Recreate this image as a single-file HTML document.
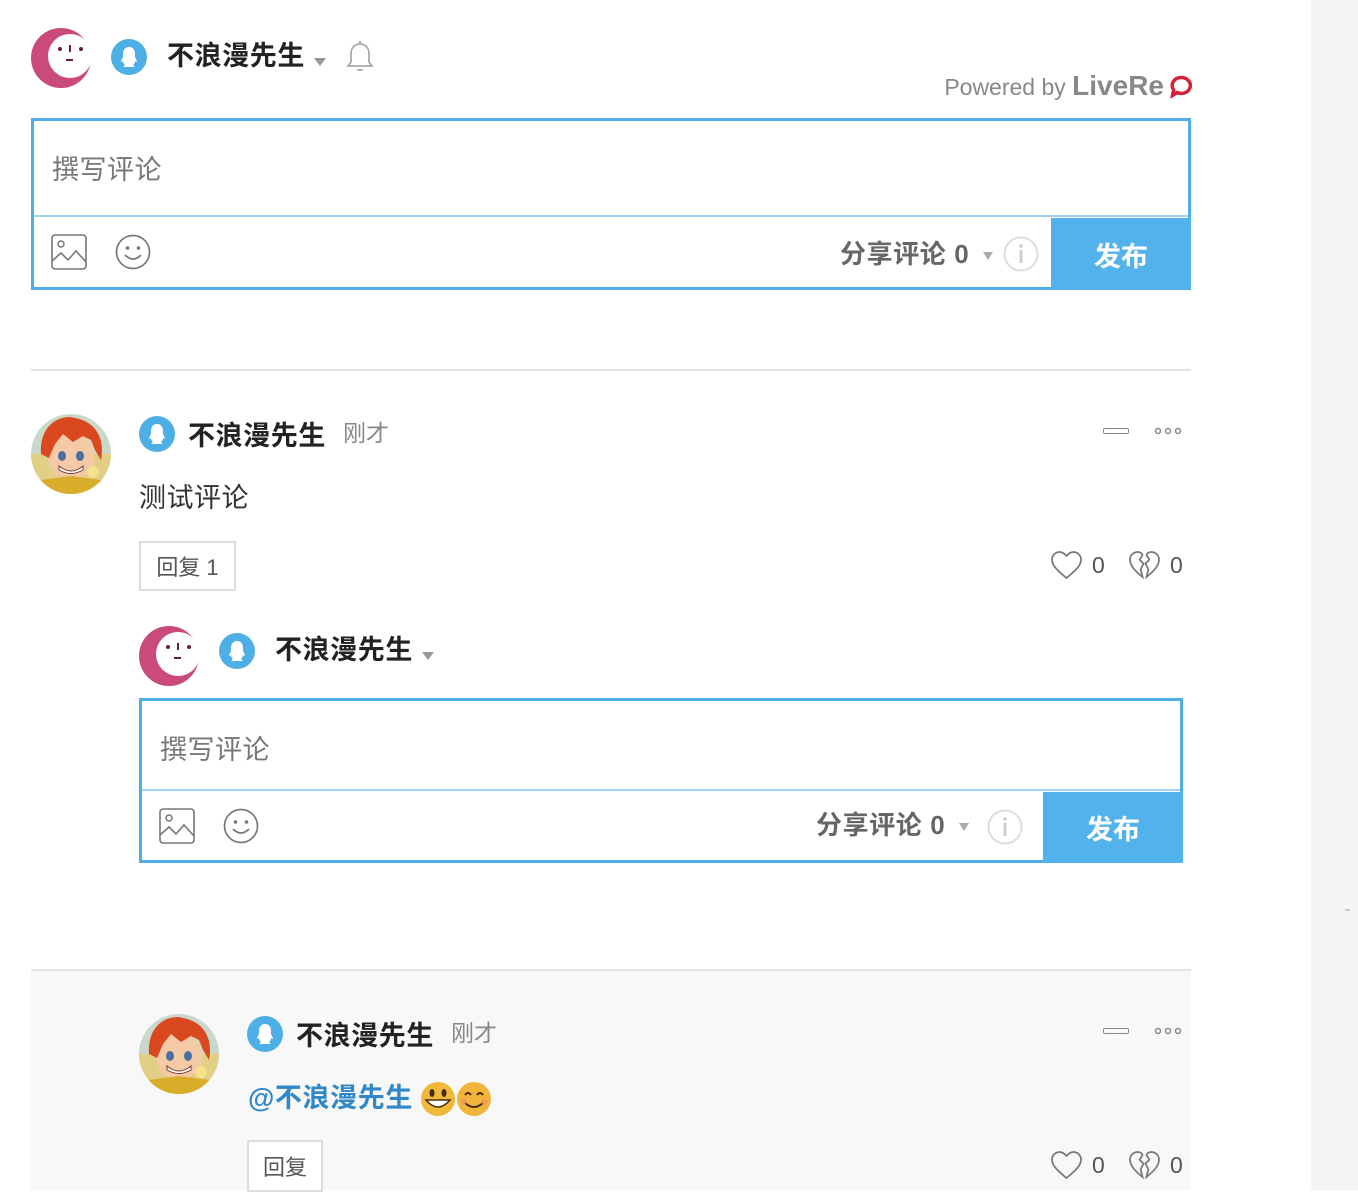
<!DOCTYPE html>
<html><head><meta charset="utf-8">
<style>
*{margin:0;padding:0;box-sizing:border-box}
body{width:1358px;height:1190px;position:relative;background:#fff;overflow:hidden;font-family:"Liberation Sans","Noto Sans CJK SC",sans-serif}
.a{position:absolute;white-space:nowrap}
.name{font-size:27px;font-weight:bold;color:#222;line-height:34px;letter-spacing:0.6px}
.time{font-size:23px;color:#888;line-height:30px}
.ph{font-size:27px;color:#777;line-height:34px;letter-spacing:0.5px}
.share{font-size:26px;font-weight:bold;color:#666;line-height:34px;letter-spacing:0.6px}
.btn{background:#52b2eb;color:#fff;font-size:27px;font-weight:bold;display:flex;align-items:center;justify-content:center}
.box{border:3px solid #4fb0e9;background:#fff}
.reply{border:2px solid #ddd;background:#fff;font-size:22px;color:#555;display:flex;align-items:center;justify-content:center}
.cnt{font-size:23px;color:#555;line-height:30px}
</style></head><body>
<svg width="0" height="0" style="position:absolute">
<defs>
<symbol id="qq" viewBox="0 0 36 36"><circle cx="18" cy="18" r="18" fill="#4eaee6"/><path d="M18 8c-4 0-6 3-6 7v3l-2 4c0 1 1 1 2 0 0 2 1 3 2 4-1 1-2 1-1 2h10c1-1 0-1-1-2 1-1 2-2 2-4 1 1 2 1 2 0l-2-4v-3c0-4-2-7-6-7z" fill="#fff"/></symbol>
<symbol id="me" viewBox="0 0 60 60"><circle cx="30" cy="30" r="30" fill="#c94a7b"/><circle cx="39" cy="28" r="22" fill="#fff"/><circle cx="29" cy="21" r="2" fill="#6b1d35"/><circle cx="50" cy="21" r="2" fill="#6b1d35"/><rect x="38" y="17" width="2" height="7" fill="#6b1d35"/><rect x="35" y="31" width="7" height="2" fill="#6b1d35"/></symbol>
<symbol id="dots" viewBox="0 0 28 8"><circle cx="4" cy="4" r="2.5" fill="none" stroke="#888" stroke-width="1.5"/><circle cx="14" cy="4" r="2.5" fill="none" stroke="#888" stroke-width="1.5"/><circle cx="24" cy="4" r="2.5" fill="none" stroke="#888" stroke-width="1.5"/></symbol>
<clipPath id="cc"><circle cx="40" cy="40" r="40"/></clipPath>
<symbol id="av" viewBox="0 0 80 80"><g clip-path="url(#cc)"><rect width="80" height="80" fill="#c9d8c8"/><rect y="40" width="80" height="40" fill="#e2cf86"/><ellipse cx="40" cy="42" rx="23" ry="24" fill="#f3c9a6"/><path d="M10 40C8 10 30 0 44 4 66 8 74 26 70 46L64 36 60 26 52 22 42 28 32 20 24 30 18 44z" fill="#d9481e"/><ellipse cx="31" cy="42" rx="4" ry="5" fill="#4a6fa3"/><ellipse cx="49" cy="42" rx="4" ry="5" fill="#4a6fa3"/><path d="M28 52q12 10 24 0v4q-12 7-24 0z" fill="#fff" stroke="#7a3a2a"/><path d="M10 66 40 62 70 66 80 80 0 80z" fill="#d8ad2a"/><circle cx="62" cy="58" r="6" fill="#f4e38a"/></g></symbol>
<symbol id="img" viewBox="0 0 36 36"><rect x="1" y="1" width="34" height="34" rx="3" fill="none" stroke="#777" stroke-width="1.6"/><circle cx="10" cy="10" r="3" fill="none" stroke="#777" stroke-width="1.5"/><path d="M1 27l9-8 7 7 8-9 10 11" fill="none" stroke="#777" stroke-width="1.6"/></symbol>
<symbol id="smi" viewBox="0 0 36 36"><circle cx="18" cy="18" r="16.5" fill="none" stroke="#777" stroke-width="1.7"/><circle cx="12.5" cy="14" r="1.8" fill="#777"/><circle cx="23.5" cy="14" r="1.8" fill="#777"/><path d="M10 21q8 8 16 0" fill="none" stroke="#777" stroke-width="1.7"/></symbol>
<symbol id="info" viewBox="0 0 36 36"><circle cx="18" cy="18" r="16.5" fill="none" stroke="#ddd" stroke-width="2"/><circle cx="18" cy="10" r="1.8" fill="#ccc"/><rect x="16.5" y="14" width="3" height="13" fill="#ccc"/></symbol>
<symbol id="heart" viewBox="0 0 34 30"><path d="M17 28C10 22 2 16 2 9 2 4 6 1 10 1c3 0 5 2 7 4 2-2 4-4 7-4 4 0 8 3 8 8 0 7-8 13-15 19z" fill="none" stroke="#777" stroke-width="1.8"/></symbol>
<symbol id="bheart" viewBox="0 0 34 30"><path d="M15 27C9 22 2 16 2 9 2 4 6 1 10 1c2 0 4 1 5 3l-3 5 4 4-3 6 2 8z" fill="none" stroke="#777" stroke-width="1.8"/><path d="M19 27C25 22 32 16 32 9 32 4 28 1 24 1c-2 0-4 1-5 3l3 5-4 4 3 6-2 8z" fill="none" stroke="#777" stroke-width="1.8"/></symbol>
<symbol id="bell" viewBox="0 0 32 34"><path d="M4 26h24l-3-4V13c0-5-4-9-9-9s-9 4-9 9v9z" fill="none" stroke="#aaa" stroke-width="1.8"/><rect x="15" y="1" width="2" height="3" fill="#aaa"/><path d="M12 29q4 4 8 0z" fill="#aaa"/></symbol>
</defs></svg>

<div class="a" style="left:1311px;top:0;width:47px;height:1190px;background:#f4f5f7"></div>
<div class="a" style="left:1345px;top:909px;width:5px;height:2px;background:#ccc"></div>

<!-- top editor -->
<svg class="a" style="left:31px;top:28px" width="60" height="60"><use href="#me"/></svg>
<svg class="a" style="left:111px;top:39px" width="36" height="36"><use href="#qq"/></svg>
<div class="a name" style="left:167px;top:39px">不浪漫先生</div>
<div class="a" style="left:314px;top:58px;border-left:6px solid transparent;border-right:6px solid transparent;border-top:8px solid #999"></div>
<svg class="a" style="left:344px;top:40px" width="32" height="34"><use href="#bell"/></svg>
<div class="a" style="right:194px;top:71px;font-size:23px;color:#888;line-height:30px">Powered by <b style="font-size:28px;color:#888">LiveRe</b></div>
<svg class="a" style="left:1169px;top:75px" width="23" height="23"><path d="M12 2.5a9 8 0 1 1-4 15l-4.5 3 1.2-5.5A9 8 0 0 1 12 2.5z" fill="none" stroke="#d3203b" stroke-width="3.5"/></svg>

<div class="a box" style="left:31px;top:118px;width:1160px;height:172px"></div>
<div class="a" style="left:34px;top:215px;width:1154px;height:2px;background:#9fd3f2"></div>
<div class="a ph" style="left:52px;top:153px">撰写评论</div>
<svg class="a" style="left:51px;top:234px" width="36" height="36"><use href="#img"/></svg>
<svg class="a" style="left:115px;top:234px" width="36" height="36"><use href="#smi"/></svg>
<div class="a share" style="left:840px;top:237px">分享评论 0</div>
<div class="a" style="left:983px;top:252px;border-left:5px solid transparent;border-right:5px solid transparent;border-top:8px solid #aaa"></div>
<svg class="a" style="left:1003px;top:236px" width="36" height="36"><use href="#info"/></svg>
<div class="a btn" style="left:1051px;top:218px;width:140px;height:72px">发布</div>

<div class="a" style="left:31px;top:369px;width:1160px;height:2px;background:#e2e2e2"></div>

<!-- comment 1 -->
<svg class="a" style="left:31px;top:414px" width="80" height="80"><use href="#av"/></svg>
<svg class="a" style="left:139px;top:416px" width="36" height="36"><use href="#qq"/></svg>
<div class="a name" style="left:188px;top:419px">不浪漫先生</div>
<div class="a time" style="left:343px;top:418px">刚才</div>
<div class="a" style="left:1103px;top:428px;width:26px;height:6px;border:1.5px solid #888;border-radius:2px"></div>
<svg class="a" style="left:1154px;top:427px" width="28" height="8"><use href="#dots"/></svg>
<div class="a" style="left:139px;top:481px;font-size:27px;color:#333;line-height:34px;letter-spacing:0.5px">测试评论</div>
<div class="a reply" style="left:139px;top:541px;width:97px;height:50px">回复 1</div>
<svg class="a" style="left:1050px;top:551px" width="33" height="29"><use href="#heart"/></svg>
<div class="a cnt" style="left:1092px;top:550px">0</div>
<svg class="a" style="left:1128px;top:551px" width="33" height="29"><use href="#bheart"/></svg>
<div class="a cnt" style="left:1170px;top:550px">0</div>

<!-- nested editor -->
<svg class="a" style="left:139px;top:626px" width="60" height="60"><use href="#me"/></svg>
<svg class="a" style="left:219px;top:633px" width="36" height="36"><use href="#qq"/></svg>
<div class="a name" style="left:275px;top:633px">不浪漫先生</div>
<div class="a" style="left:422px;top:652px;border-left:6px solid transparent;border-right:6px solid transparent;border-top:8px solid #999"></div>
<div class="a box" style="left:139px;top:698px;width:1044px;height:165px"></div>
<div class="a" style="left:142px;top:789px;width:1038px;height:2px;background:#9fd3f2"></div>
<div class="a ph" style="left:160px;top:733px">撰写评论</div>
<svg class="a" style="left:159px;top:808px" width="36" height="36"><use href="#img"/></svg>
<svg class="a" style="left:223px;top:808px" width="36" height="36"><use href="#smi"/></svg>
<div class="a share" style="left:816px;top:808px">分享评论 0</div>
<div class="a" style="left:959px;top:823px;border-left:5px solid transparent;border-right:5px solid transparent;border-top:8px solid #aaa"></div>
<svg class="a" style="left:987px;top:809px" width="36" height="36"><use href="#info"/></svg>
<div class="a btn" style="left:1043px;top:792px;width:140px;height:71px">发布</div>

<!-- comment 2 -->
<div class="a" style="left:31px;top:969px;width:1160px;height:2px;background:#e2e2e2"></div>
<div class="a" style="left:31px;top:971px;width:1160px;height:219px;background:#f8f8f8"></div>
<svg class="a" style="left:139px;top:1014px" width="80" height="80"><use href="#av"/></svg>
<svg class="a" style="left:247px;top:1016px" width="36" height="36"><use href="#qq"/></svg>
<div class="a name" style="left:296px;top:1019px">不浪漫先生</div>
<div class="a time" style="left:451px;top:1018px">刚才</div>
<div class="a" style="left:1103px;top:1028px;width:26px;height:6px;border:1.5px solid #888;border-radius:2px"></div>
<svg class="a" style="left:1154px;top:1027px" width="28" height="8"><use href="#dots"/></svg>
<div class="a" style="left:248px;top:1081px;font-size:27px;font-weight:bold;color:#3188c9;line-height:34px;letter-spacing:0.6px">@不浪漫先生</div>
<svg class="a" style="left:420px;top:1080px" width="74" height="38">
<circle cx="18" cy="19" r="17" fill="#f0b93a"/><ellipse cx="12" cy="13" rx="2.5" ry="4" fill="#4a2b10"/><ellipse cx="24" cy="13" rx="2.5" ry="4" fill="#4a2b10"/><path d="M6 20q12 14 24 0z" fill="#fff" stroke="#4a2b10" stroke-width="1.5"/>
<circle cx="54" cy="19" r="17" fill="#f2b53c"/><path d="M45 15q3-4 6 0M57 15q3-4 6 0" fill="none" stroke="#4a2b10" stroke-width="2"/><path d="M45 23q9 8 18 0" fill="none" stroke="#4a2b10" stroke-width="2"/><circle cx="44" cy="22" r="3" fill="#f08a6a" opacity=".6"/><circle cx="64" cy="22" r="3" fill="#f08a6a" opacity=".6"/>
</svg>
<div class="a reply" style="left:247px;top:1140px;width:76px;height:52px">回复</div>
<svg class="a" style="left:1050px;top:1151px" width="33" height="29"><use href="#heart"/></svg>
<div class="a cnt" style="left:1092px;top:1150px">0</div>
<svg class="a" style="left:1128px;top:1151px" width="33" height="29"><use href="#bheart"/></svg>
<div class="a cnt" style="left:1170px;top:1150px">0</div>
</body></html>
